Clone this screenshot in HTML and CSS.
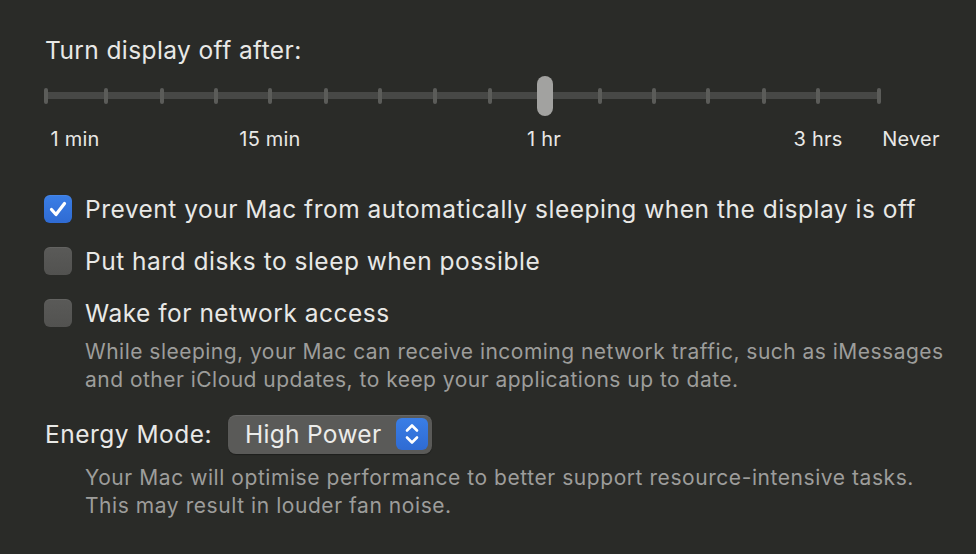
FILE: index.html
```html
<!DOCTYPE html>
<html lang="en">
<head>
<meta charset="utf-8">
<title>Energy Settings</title>
<link rel="stylesheet" href="styles.css">
</head>
<body>
<main class="panel">
  <h1 class="title">Turn display off after:</h1>

  <div class="slider">
    <div class="track">
      <span class="tick" style="left:2px"></span>
      <span class="tick" style="left:62px"></span>
      <span class="tick" style="left:118px"></span>
      <span class="tick" style="left:172px"></span>
      <span class="tick" style="left:226px"></span>
      <span class="tick" style="left:282px"></span>
      <span class="tick" style="left:336px"></span>
      <span class="tick" style="left:391px"></span>
      <span class="tick" style="left:446px"></span>
      <span class="tick" style="left:501px"></span>
      <span class="tick" style="left:556px"></span>
      <span class="tick" style="left:610px"></span>
      <span class="tick" style="left:664px"></span>
      <span class="tick" style="left:720px"></span>
      <span class="tick" style="left:774px"></span>
      <span class="tick" style="left:835px"></span>
    </div>
    <span class="thumb" style="left:493px"></span>
  </div>

  <div class="scale">
    <span class="scale-label" style="left:31px">1 min</span>
    <span class="scale-label" style="left:226px">15 min</span>
    <span class="scale-label" style="left:500px">1 hr</span>
    <span class="scale-label" style="left:774px">3 hrs</span>
    <span class="scale-label" style="left:867px">Never</span>
  </div>

  <div class="options">
    <label class="option">
      <span class="checkbox checked">
        <svg viewBox="0 0 28 28" width="28" height="28"><path d="M7.5 14.5 L12 19.5 L20.5 8.5" fill="none" stroke="#fff" stroke-width="3.2" stroke-linecap="round" stroke-linejoin="round"/></svg>
      </span>
      <span class="option-text">Prevent your Mac from automatically sleeping when the display is off</span>
    </label>
    <label class="option">
      <span class="checkbox"></span>
      <span class="option-text">Put hard disks to sleep when possible</span>
    </label>
    <label class="option">
      <span class="checkbox"></span>
      <span class="option-text">Wake for network access</span>
    </label>
  </div>
  <p class="help help-wake">While sleeping, your Mac can receive incoming network traffic, such as iMessages<br>and other iCloud updates, to keep your applications up to date.</p>

  <div class="energy-row">
    <span class="energy-label">Energy Mode:</span>
    <div class="popup">
      <span class="popup-text">High Power</span>
      <span class="stepper">
        <svg viewBox="0 0 32 32" width="32" height="32"><path d="M11 12.5 L16 7.5 L21 12.5" fill="none" stroke="#fff" stroke-width="2.6" stroke-linecap="round" stroke-linejoin="round"/><path d="M11 19.5 L16 24.5 L21 19.5" fill="none" stroke="#fff" stroke-width="2.6" stroke-linecap="round" stroke-linejoin="round"/></svg>
      </span>
    </div>
  </div>
  <p class="help help-energy">Your Mac will optimise performance to better support resource-intensive tasks.<br>This may result in louder fan noise.</p>
</main>
</body>
</html>
```

FILE: styles.css
```css
html, body {
  margin: 0;
  padding: 0;
  background: #2a2b28;
  height: 100%;
}
body {
  font-family: Inter, "Noto Sans", "Liberation Sans", sans-serif;
  color: #e8e8e6;
  overflow: hidden;
}
.panel {
  padding: 36px 0 0 44px;
  display: flex;
  flex-direction: column;
}
.title {
  margin: 0 0 0 1px;
  font-size: 24.5px;
  letter-spacing: 0.4px;
  font-weight: 400;
  line-height: 28px;
  height: 28px;
  color: #e8e8e6;
}
.slider {
  position: relative;
  margin-top: 12px;
  width: 840px;
  height: 40px;
}
.track {
  position: absolute;
  left: 0;
  top: 16px;
  width: 837px;
  height: 7px;
  background: #474846;
  border-radius: 3px;
}
.tick {
  position: absolute;
  top: -4px;
  width: 4px;
  height: 16px;
  margin-left: -2px;
  background: #5b5c59;
  border-radius: 2px;
}
.thumb {
  position: absolute;
  top: 0;
  width: 16px;
  height: 40px;
  background: #a2a2a0;
  border-radius: 8px;
}
.scale {
  position: relative;
  margin-top: 11px;
  height: 24px;
  width: 900px;
}
.scale-label {
  position: absolute;
  top: 0;
  transform: translateX(-50%);
  font-size: 20px;
  letter-spacing: 0.2px;
  line-height: 24px;
  white-space: nowrap;
  color: #e8e8e6;
}
.options {
  margin-top: 44px;
  display: flex;
  flex-direction: column;
  gap: 24px;
}
.option {
  display: flex;
  align-items: center;
  gap: 13px;
  height: 28px;
}
.checkbox {
  width: 28px;
  height: 28px;
  box-sizing: border-box;
  border-radius: 6px;
  background: linear-gradient(#5a5a58, #525250);
  box-shadow: inset 0 1px 0 rgba(255,255,255,0.06);
  flex: none;
  display: flex;
}
.checkbox.checked {
  background: linear-gradient(#3a7ee6, #2f6bd3);
}
.option-text {
  font-size: 24.5px;
  letter-spacing: 0.5px;
  line-height: 28px;
  white-space: nowrap;
}
.help {
  margin: 0;
  padding-left: 41px;
  font-size: 21px;
  letter-spacing: 0.48px;
  line-height: 28px;
  color: #9d9d9b;
  white-space: nowrap;
}
.help-wake {
  margin-top: 11px;
}
.energy-row {
  margin-top: 20px;
  display: flex;
  align-items: center;
  height: 40px;
}
.energy-label {
  font-size: 24.5px;
  letter-spacing: 0.5px;
  line-height: 28px;
  margin-left: 1px;
  width: 183px;
}
.popup {
  display: flex;
  align-items: center;
  width: 204px;
  height: 39px;
  box-sizing: border-box;
  border-radius: 8px;
  background: #5a5a58;
  box-shadow: inset 0 1px 0 rgba(255,255,255,0.08), 0 1px 1px rgba(0,0,0,0.3);
  padding: 0 4px 0 17px;
}
.popup-text {
  flex: 1;
  font-size: 24.5px;
  letter-spacing: 0.3px;
  line-height: 28px;
  color: #ececea;
}
.stepper {
  width: 32px;
  height: 32px;
  border-radius: 6px;
  background: linear-gradient(#3a7ee6, #2f6bd3);
  display: flex;
}
.help-energy {
  margin-top: 10px;
  letter-spacing: 0.56px;
}
```
